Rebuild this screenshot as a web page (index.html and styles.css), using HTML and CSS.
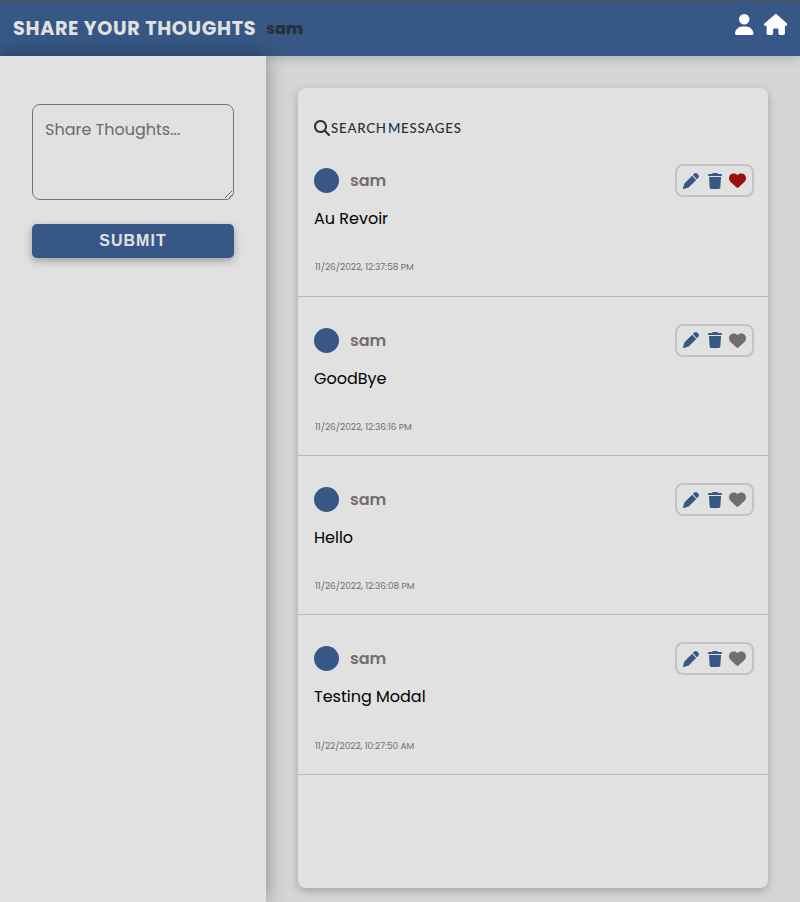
FILE: index.html
```
<!DOCTYPE html>
<html lang="en">
<head>
<meta charset="utf-8">
<title>Share Your Thoughts</title>
<link rel="stylesheet" href="styles.css">
</head>
<body>
<svg class="defs" aria-hidden="true">
  <symbol id="pen" viewBox="0 0 512 512"><path d="M362.700 19.300L314.300 67.700 444.300 197.700l48.400-48.400c25-25 25-65.500 0-90.500L453.300 19.300c-25-25-65.500-25-90.500 0zm-71 71L58.600 323.500c-10.400 10.400-18 23.300-22.200 37.400L1 481.200C-1.500 489.700 .8 498.800 7 505s15.300 8.500 23.700 6.100l120.300-35.400c14.100-4.200 27-11.800 37.400-22.200L421.700 220.300 291.700 90.300z"/></symbol>
  <symbol id="trash" viewBox="0 0 448 512"><path d="M135.200 17.700L128 32H32C14.300 32 0 46.300 0 64S14.300 96 32 96H416c17.700 0 32-14.300 32-32s-14.300-32-32-32H320l-7.200-14.300C307.400 6.800 296.300 0 284.200 0H163.800c-12.100 0-23.200 6.800-28.600 17.700zM416 128H32L53.200 467c1.600 25.300 22.600 45 47.900 45H346.900c25.300 0 46.300-19.700 47.900-45L416 128z"/></symbol>
  <symbol id="heart" viewBox="0 0 512 512"><path d="M47.600 300.400L228.300 469.100c7.500 7 17.400 10.900 27.700 10.900s20.200-3.900 27.700-10.900L464.400 300.400c30.400-28.300 47.600-68 47.600-109.500v-5.800c0-69.900-50.500-129.500-119.400-141C347 36.500 300.600 51.400 268 84L256 96 244 84c-32.600-32.600-79-47.500-124.600-39.900C50.500 55.600 0 115.200 0 185.100v5.800c0 41.500 17.200 81.200 47.600 109.500z"/></symbol>
</svg>
<header class="topbar">
  <h1>SHARE YOUR THOUGHTS</h1>
  <span class="current">sam</span>
  <nav>
    <svg class="user" viewBox="0 0 448 512"><path d="M224 256A128 128 0 1 0 224 0a128 128 0 1 0 0 256zm-45.700 48C79.800 304 0 383.800 0 482.300C0 498.700 13.300 512 29.700 512H418.300c16.400 0 29.700-13.300 29.700-29.700C448 383.800 368.200 304 269.700 304H178.300z"/></svg>
    <svg class="home" viewBox="0 0 576 512"><path d="M575.800 255.500c0 18-15 32.100-32 32.100h-32l.7 160.200V472c0 22.100-17.900 40-40 40H392c-22.100 0-40-17.900-40-40V384c0-17.700-14.300-32-32-32H256c-17.700 0-32 14.300-32 32v88c0 22.100-17.900 40-40 40H104c-22.100 0-40-17.900-40-40V287.600H32c-18 0-32-14-32-32.100c0-9 3-17 10-24L266.400 8c7-7 15-8 22-8s15 2 21 7L564.800 231.500c8 7 12 15 11 24z"/></svg>
  </nav>
</header>
<div class="layout">
  <aside>
    <textarea placeholder="Share Thoughts..."></textarea>
    <button>SUBMIT</button>
  </aside>
  <main>
    <section class="feed">
      <div class="search">
        <svg viewBox="0 0 512 512"><path d="M416 208c0 45.900-14.900 88.300-40 122.700L502.600 457.400c12.500 12.500 12.500 32.800 0 45.300s-32.800 12.500-45.300 0L330.700 376c-34.400 25.200-76.800 40-122.700 40C93.100 416 0 322.900 0 208S93.100 0 208 0S416 93.100 416 208zM208 352a144 144 0 1 0 0-288 144 144 0 1 0 0 288z"/></svg>
        <span>SEARCH MESSAGES</span>
      </div>
      <article>
        <div class="head"><i class="avatar"></i><b>sam</b><div class="tools"><svg><use href="#pen"/></svg><svg class="trash"><use href="#trash"/></svg><svg class="heart liked"><use href="#heart"/></svg></div></div>
        <p>Au Revoir</p><time>11/26/2022, 12:37:58 PM</time>
      </article>
      <article>
        <div class="head"><i class="avatar"></i><b>sam</b><div class="tools"><svg><use href="#pen"/></svg><svg class="trash"><use href="#trash"/></svg><svg class="heart"><use href="#heart"/></svg></div></div>
        <p>GoodBye</p><time>11/26/2022, 12:36:16 PM</time>
      </article>
      <article>
        <div class="head"><i class="avatar"></i><b>sam</b><div class="tools"><svg><use href="#pen"/></svg><svg class="trash"><use href="#trash"/></svg><svg class="heart"><use href="#heart"/></svg></div></div>
        <p>Hello</p><time>11/26/2022, 12:36:08 PM</time>
      </article>
      <article>
        <div class="head"><i class="avatar"></i><b>sam</b><div class="tools"><svg><use href="#pen"/></svg><svg class="trash"><use href="#trash"/></svg><svg class="heart"><use href="#heart"/></svg></div></div>
        <p>Testing Modal</p><time>11/22/2022, 10:27:50 AM</time>
      </article>
    </section>
  </main>
</div>
</body>
</html>
```
FILE: styles.css
```
* { box-sizing: border-box; margin: 0; padding: 0; }
body { height: 902px; overflow: hidden; background: #d6d6d6; font-family: Poppins, Inter, sans-serif; font-size: 16px; color: #000; }
.defs { display: none; }
svg { fill: currentColor; flex: none; }

.topbar { height: 56px; display: flex; align-items: center; padding: 0 13px 0 13px; background: #375886; border-top: 1px solid #555; box-shadow: 0 2px 10px rgba(0,0,0,.2); }
.topbar h1 { width: 253px; font-size: 19.200px; line-height: 28px; font-weight: 700; letter-spacing: .65px; color: #e1e1e1; white-space: nowrap; }
.current { font-size: 16px; font-weight: 800; color: #263238; }
.topbar nav { margin-left: auto; display: flex; gap: 10px; padding-bottom: 8px; color: #fff; }
.user { width: 18.500px; height: 21px; }
.home { width: 23.500px; height: 21px; }

.layout { display: flex; height: 846px; }
aside { width: 266px; padding: 48px 32px; background: #e1e1e1; box-shadow: 0 0 20px rgba(0,0,0,.38); }
textarea { display: block; width: 202px; height: 96px; padding: 12px; border: 1px solid #757575; border-radius: 8px; background: transparent; font: 16px/26px Poppins, Inter, sans-serif; outline: none; }
textarea::placeholder { color: #6b6b6b; }
button { display: block; width: 202px; height: 34px; margin-top: 24px; border: 0; border-radius: 5px; background: #375886; color: #e1e1e1; font: bold 16px/34px "Liberation Sans", sans-serif; letter-spacing: 1px; box-shadow: 0 3px 8px rgba(0,0,0,.3); }

main { flex: 1; padding: 32px; }
.feed { width: 470px; height: 800px; background: #e1e1e1; border-radius: 8px; box-shadow: 0 3px 10px rgba(0,0,0,.24); }
.search { height: 49.300px; padding: 32px 16px 0; display: flex; color: #263238; font: 500 13.300px/16px Lato, sans-serif; }
.search svg { width: 16px; height: 16px; margin-right: 1px; }
.search span { white-space: nowrap; letter-spacing: .75px; word-spacing: -3px; }

article { height: 159.400px; padding: 27px 14px 0 16px; border-bottom: 1px solid #b9b9b9; }
.head { display: flex; align-items: center; height: 33px; }
.avatar { width: 25px; height: 25px; margin-right: 11px; border-radius: 50%; background: #375886; }
.head b { font-weight: 600; color: #746d6d; }
.tools { margin-left: auto; width: 79px; height: 33px; display: flex; align-items: center; justify-content: space-between; padding: 0 6px; border: 2px solid #c2c2c2; border-radius: 8px; color: #375886; }
.tools svg { width: 16px; height: 16px; }
.tools .trash { margin-left: 1px; }
.tools .heart { width: 17px; height: 17px; color: #746d6d; }
.tools .liked { color: #98120d; }
article p { margin-top: 9.900px; line-height: 24px; white-space: nowrap; }
time { display: block; margin: 29.200px 0 0 1px; font-size: 9px; line-height: 14px; letter-spacing: -.03px; color: #746d6d; white-space: nowrap; }
```
